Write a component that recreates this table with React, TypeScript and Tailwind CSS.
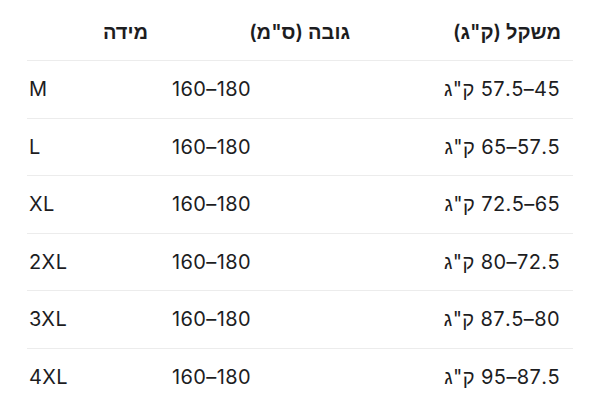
import React from "react";

const rows = [
  { size: "M", height: "160–180", weight: "45–57.5 ק\"ג" },
  { size: "L", height: "160–180", weight: "57.5–65 ק\"ג" },
  { size: "XL", height: "160–180", weight: "65–72.5 ק\"ג" },
  { size: "2XL", height: "160–180", weight: "72.5–80 ק\"ג" },
  { size: "3XL", height: "160–180", weight: "80–87.5 ק\"ג" },
  { size: "4XL", height: "160–180", weight: "87.5–95 ק\"ג" },
];

export default function App() {
  return (
    <div
      className="w-[600px] h-[418px] bg-white text-[#1d1d1f] overflow-hidden"
      style={{ fontFamily: 'Inter, "Liberation Sans", "DejaVu Sans", sans-serif' }}
    >
      <div className="ml-[27px] w-[546px]">
        <div className="grid grid-cols-[133px_202px_1fr] h-[60px] items-center pt-[4px] text-[20px] font-semibold">
          <div dir="rtl" className="text-right pr-[12px]">מידה</div>
          <div dir="rtl" className="text-right pr-[12px]">גובה (ס"מ)</div>
          <div dir="rtl" className="text-right pr-[12px]">משקל (ק"ג)</div>
        </div>
        {rows.map((r) => (
          <div
            key={r.size}
            className="grid grid-cols-[133px_202px_1fr] h-[57.5px] items-center border-t border-[#ececec] text-[20px] tracking-[0.02em]"
          >
            <div dir="ltr" className="text-left pl-[2px]">{r.size}</div>
            <div dir="ltr" className="text-left pl-[12px]">{r.height}</div>
            <div dir="rtl" className="text-right pr-[13px]">{r.weight}</div>
          </div>
        ))}
      </div>
    </div>
  );
}
